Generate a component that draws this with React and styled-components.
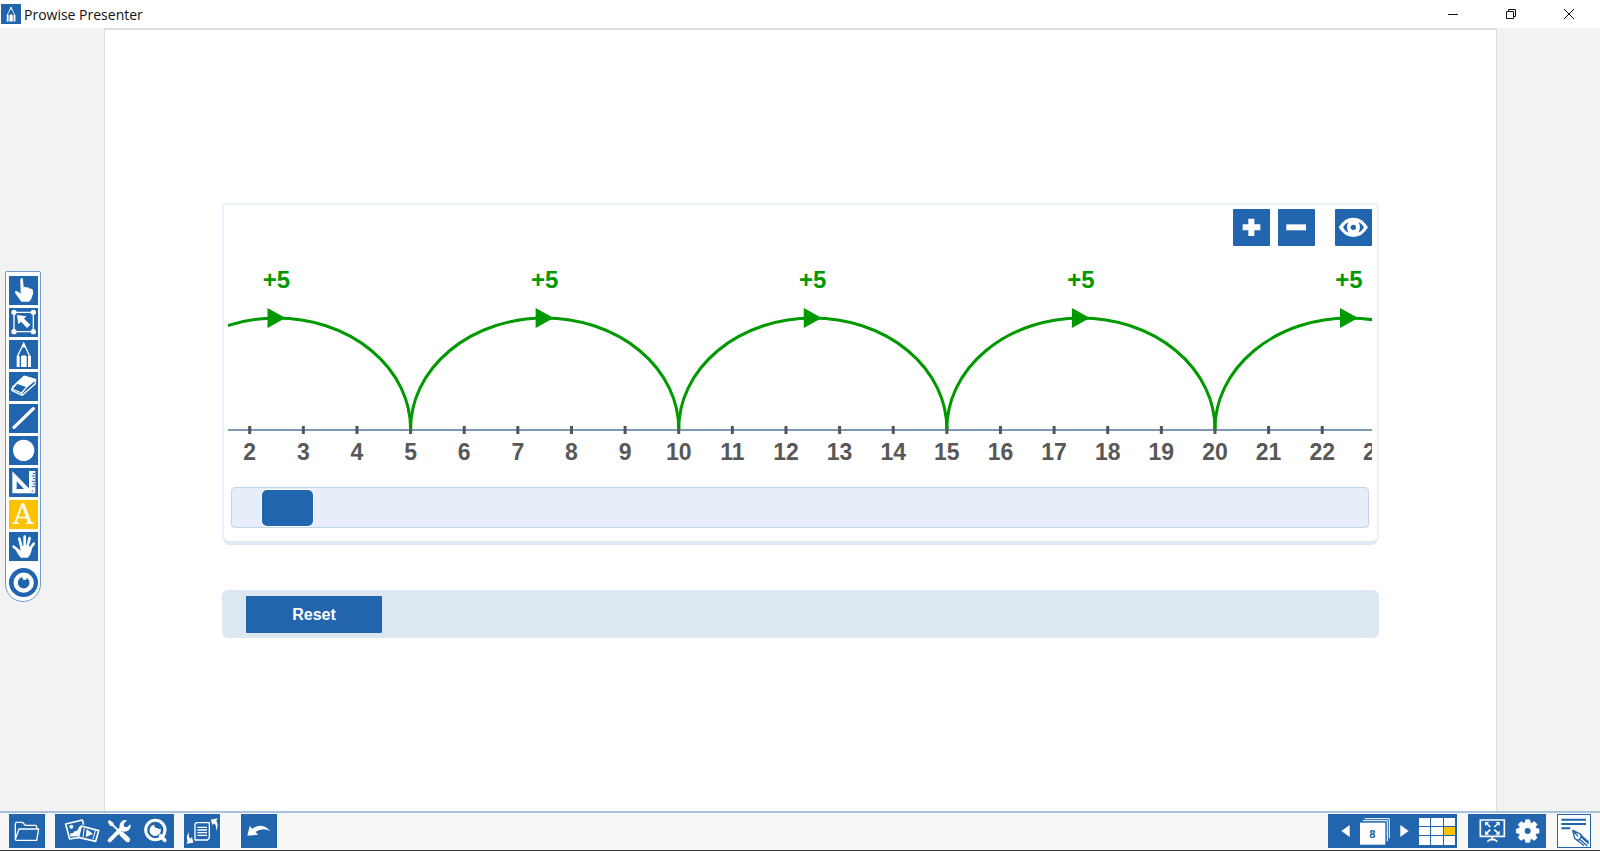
import React, { useState, useRef, useLayoutEffect } from 'react'
import styled, { createGlobalStyle } from 'styled-components';

const BLUE = '#2165ae';
const GREEN = '#009900';

const GlobalStyle = createGlobalStyle`
  * {
    box-sizing: border-box;
  }
  body {
    margin: 0;
    font-family: "Liberation Sans", Arial, sans-serif;
  }
  button, input {
    margin: 0;
    padding: 0;
    border: none;
    font: inherit;
  }
  button {
    cursor: pointer;
  }
`;

const Main = styled.div`
  display: flex;
  flex-direction: column;
  min-height: 100vh;
  background-color: #f2f2f2;
  border-bottom: 1px solid #33343a;
`;
const TitleBar = styled.header`
  display: flex;
  align-items: center;
  height: 28px;
  padding: 0 2px 0 1px;
  background-color: #fff;
`;
const Logo = styled.span`
  background-color: ${BLUE};
  color: #fff;
`;
const Title = styled.h1`
  flex-grow: 1;
  margin: 0 0 0 3px;
  padding-top: 2px;
  font-family: "Open Sans", "Noto Sans", sans-serif;
  font-size: 14px;
  font-weight: 400;
  line-height: 26px;
  color: #111;
`;
const WindowButton = styled.button`
  width: 58px;
  height: 28px;
  background: none;
`;
const Svg = styled.svg`
  display: block;
  margin: 0 auto;
  flex-shrink: 0;
`;
const Workspace = styled.div`
  flex-grow: 1;
  display: grid;
  grid-template-columns: 104px 1fr 103px;
`;
const Page = styled.main`
  min-width: 0;
  border: 1px solid #dcdcdc;
  border-top: 2px solid #dedede;
  border-bottom: none;
  background-color: #fff;
  padding: 173px 117px 0;
`;
const SideBar = styled.nav`
  align-self: center;
  display: flex;
  flex-direction: column;
  align-items: center;
  gap: 3px;
  width: 36px;
  margin: 34px 0 0 5px;
  padding: 4px 0;
  border: 1px solid #6b9bd0;
  border-radius: 2px 2px 18px 18px;
  background-color: #fff;
`;
const ToolButton = styled.button`
  display: flex;
  align-items: center;
  justify-content: center;
  width: 29px;
  height: 29px;
  color: #fff;
  background-color: ${(props) => (props.$active ? '#fdc300' : BLUE)};
`;
const RoundButton = styled(ToolButton)`
  border-radius: 50%;
  margin-top: 4px;
`;
const Letter = styled.span`
  font-family: "DejaVu Serif", serif;
  font-size: 28px;
  line-height: 29px;
`;
const Card = styled.section`
  border: 2px solid #eaf1f9;
  border-bottom: 4px solid #dfe9f3;
  border-radius: 4px 4px 8px 8px;
  padding: 4px 5px 13px 4px;
`;
const CardTools = styled.div`
  display: flex;
  justify-content: flex-end;
  gap: 8px;
`;
const CardButton = styled.button`
  width: 37px;
  height: 37px;
  border-radius: 1px;
  background-color: ${BLUE};
  color: #fff;
  &:last-child {
    margin-left: 12px;
  }
`;
const Chart = styled.svg`
  display: block;
  width: 100%;
  height: 241px;
  overflow: hidden;
  font-size: 23px;
  font-weight: 700;
  text-anchor: middle;
`;
const ScrollArea = styled.div`
  padding: 0 3px;
`;
const Scroll = styled.input`
  appearance: none;
  display: block;
  width: 100%;
  height: 41px;
  border: 1px solid #c3d5ea;
  border-radius: 4px;
  background-color: #e8eef9;
  &::-webkit-slider-thumb {
    appearance: none;
    width: 51px;
    height: 36px;
    border-radius: 5px;
    background-color: ${BLUE};
    box-shadow: 0 0 0 1px #fff;
  }
`;
const ResetBar = styled.div`
  margin-top: 45px;
  padding: 6px 24px 5px;
  border-radius: 6px;
  background-color: #dde7f1;
`;
const Reset = styled.button`
  display: block;
  width: 136px;
  height: 37px;
  border-radius: 1px;
  background-color: ${BLUE};
  color: #fff;
  font-size: 16px;
  font-weight: 700;
`;
const BottomBar = styled.footer`
  display: flex;
  align-items: center;
  justify-content: space-between;
  padding: 1px 9px 2px;
  border-top: 2px solid #a9c1dd;
  background-color: #f8f8f8;
`;
const BarSide = styled.div`
  display: flex;
  gap: ${(props) => props.$gap};
`;
const Group = styled.div`
  display: flex;
  align-items: center;
  gap: ${(props) => props.$gap || '0'};
  height: 34px;
  padding: ${(props) => props.$pad || '0'};
  background-color: ${BLUE};
  color: #fff;
`;
const BarButton = styled.button`
  display: flex;
  align-items: center;
  height: 34px;
  background: none;
  color: inherit;
`;
const NoteButton = styled(BarButton)`
  border: 1px solid ${BLUE};
  background-color: #fff;
  color: ${BLUE};
`;
const Undo = styled(Group)`
  margin-left: 11px;
`;
const PageNumber = styled.button`
  position: relative;
  width: 30px;
  height: 27px;
  background: none;
  color: inherit;
`;
const PageCount = styled.span`
  position: absolute;
  left: 0;
  bottom: 0;
  width: 25px;
  font-family: "Open Sans", sans-serif;
  font-size: 11px;
  font-weight: 700;
  line-height: 23px;
  color: ${BLUE};
`;
const Overview = styled.button`
  display: grid;
  grid-template-columns: repeat(3, 1fr);
  gap: 1px;
  width: 36px;
  height: 27px;
  background: none;
`;
const Cell = styled.span`
  height: 100%;
  min-height: 8px;
  background-color: ${(props) => (props.$current ? '#fdc300' : '#fff')};
`;

// icons are drawn on a grid three times finer than their size on the page
const Icon = ({ w, h = w, grid = `0 0 ${w * 3} ${h * 3}`, children }) => (
  <Svg width={w} height={h} viewBox={grid} fill="none" stroke="none" aria-hidden="true">
    {children}
  </Svg>
);

const PencilShape = () => (
  <>
    <path d="M25 50 L44 10 L63 50" stroke="currentColor" strokeWidth="4" />
    <path d="M44 6 L37 24 Q44 19 51 24Z M23 49 q5 -5 9 0 V81 H23Z M36 49 q8 -7 17 0 V81 H36Z M57 49 q5 -5 9 0 V81 H57Z" fill="currentColor" />
  </>
);

const tools = [
  { name: 'Select', icon: <path fill="currentColor" d="M34 12 Q34 6 38 6 Q42 6 42 12 L44 34 Q48 30 53 35 Q58 32 62 38 Q68 36 72 43 Q74 52 70 61 Q68 70 60 77 H37 Q32 70 23 58 Q15 48 20 45 Q25 43 35 53 Z" /> },
  { name: 'Select area', icon: (
    <>
      <path d="M15 13 H73 V71 H15Z" stroke="currentColor" strokeWidth="4" />
      <path fill="currentColor" d="M24 21 L52 25 L45 32 L64 50 L54 60 L36 41 L28 49Z" />
      {[[15, 13], [73, 13], [15, 71], [73, 71]].map(([x, y]) => (
        <circle key={`${x}-${y}`} cx={x} cy={y} r="8" fill="currentColor" />
      ))}
    </>
  ) },
  { name: 'Pen', icon: <PencilShape /> },
  { name: 'Eraser', icon: (
    <g stroke="currentColor" strokeWidth="4" strokeLinejoin="round">
      <path d="M46 13 L80 23 L78 36 L40 70 L9 56 L11 45 L24 33Z" />
      <path d="M46 13 L79 23 L54 44 L24 33Z" fill="currentColor" />
      <path d="M24 33 L9 51 L38 63 L54 44 M38 63 L40 70" />
    </g>
  ) },
  { name: 'Line', icon: <path d="M15 70 L73 14" stroke="currentColor" strokeWidth="10" strokeLinecap="round" /> },
  { name: 'Shapes', icon: <circle cx="44" cy="43" r="32" fill="currentColor" /> },
  { name: 'Ruler', icon: (
    <>
      <path fill="currentColor" fillRule="evenodd" d="M10 10 L74 76 H10Z M23 40 V63 H45Z" />
      <path fill="currentColor" d="M60 9 H79 V76 H69 L60 61Z" />
      <path stroke={BLUE} strokeWidth="3" d="M71 16 H79 M68 24 H79 M71 32 H79 M68 40 H79 M71 48 H79 M68 56 H79 M68 69 H73" />
    </>
  ) },
  { name: 'Text', active: true },
  { name: 'Move', icon: (
    <>
      <path d="M38 48 L31 20 M47 46 L47 14 M54 48 L62 18 M60 54 L74 35 M34 60 L14 44" stroke="currentColor" strokeWidth="8" strokeLinecap="round" />
      <path fill="currentColor" d="M34 42 H59 L69 49 Q66 70 56 77 H36 Q28 70 20 54 L35 56Z" />
    </>
  ) },
];

const UNIT = 53.625; // width of one step on the number line
const JUMP = 5;
const START = 1.595;
const AXIS = 184;
const LABEL = 0.3; // a label reaches this far past its tick, in steps

const NumberLine = ({ start }) => {
  const chartRef = useRef(null);
  const [width, setWidth] = useState(0);

  useLayoutEffect(() => {
    const measure = () => setWidth(chartRef.current.getBoundingClientRect().width);
    measure();
    window.addEventListener('resize', measure);
    return () => window.removeEventListener('resize', measure);
  }, []);

  const end = start + width / UNIT;
  const rx = (JUMP * UNIT) / 2;
  const toX = (n) => (n - start) * UNIT;

  // only the part of the line that is in view
  const ticks = [];
  for (let n = Math.ceil(start - LABEL); n < end + LABEL; n++) ticks.push(n);
  const jumps = [];
  for (let n = Math.max(0, Math.floor(start / JUMP) * JUMP); n < end; n += JUMP) jumps.push(n);

  return (
    <Chart ref={chartRef} role="img" aria-label="Number line">
      <line x1="0" x2="100%" y1={AXIS} y2={AXIS} stroke="#7d9ab5" strokeWidth="2" />
      {ticks.map((n) => (
        <g key={n}>
          <line x1={toX(n)} x2={toX(n)} y1={AXIS - 4} y2={AXIS + 4} stroke="#555" strokeWidth="3" />
          <text x={toX(n)} y={AXIS + 30} fill="#585858">{n}</text>
        </g>
      ))}
      {jumps.map((n) => {
        const mid = toX(n) + rx;
        return (
          <g key={n}>
            <path d={`M${toX(n)} ${AXIS - 1} A${rx} 111 0 0 1 ${toX(n + JUMP)} ${AXIS - 1}`} fill="none" stroke={GREEN} strokeWidth="3" />
            <path d={`M${mid - 9} 62 L${mid + 9} 72 L${mid - 9} 82Z`} fill={GREEN} />
            <text x={mid} y="42" fontSize="24" fill={GREEN}>+{JUMP}</text>
          </g>
        );
      })}
    </Chart>
  );
};

export default function App() {
  const [start, setStart] = useState(START);
  const [pageNumber, setPageNumber] = useState(8);

  return (
    <Main>
      <GlobalStyle />
      <TitleBar>
        <Logo>
          <Icon w={20} grid="-6 -6 100 100"><PencilShape /></Icon>
        </Logo>
        <Title>Prowise Presenter</Title>
        <WindowButton aria-label="Minimize">
          <Svg width="10" height="10"><path d="M0 5.5 H10" stroke="#111" /></Svg>
        </WindowButton>
        <WindowButton aria-label="Restore">
          <Svg width="10" height="10" fill="none" stroke="#111"><path d="M.5 2.5 H7.5 V9.5 H.5Z M2.5 2.5 V.5 H9.5 V7.5 H7.5" /></Svg>
        </WindowButton>
        <WindowButton aria-label="Close">
          <Svg width="10" height="10"><path d="M0 0 L10 10 M10 0 L0 10" stroke="#111" /></Svg>
        </WindowButton>
      </TitleBar>

      <Workspace>
        <SideBar>
          {tools.map((tool) => (
            <ToolButton key={tool.name} aria-label={tool.name} $active={tool.active}>
              {tool.icon ? <Icon w={29}>{tool.icon}</Icon> : <Letter>A</Letter>}
            </ToolButton>
          ))}
          <RoundButton aria-label="Menu">
            <Icon w={29}>
              <circle cx="44" cy="44" r="24" stroke="currentColor" strokeWidth="13" />
              <circle cx="47" cy="29" r="7" fill="currentColor" />
            </Icon>
          </RoundButton>
        </SideBar>

        <Page>
          <Card>
            <CardTools>
              <CardButton aria-label="Zoom in">
                <Icon w={37}><path d="M55 29 V81 M29 55 H82" stroke="currentColor" strokeWidth="18" /></Icon>
              </CardButton>
              <CardButton aria-label="Zoom out">
                <Icon w={37}><path d="M25 55 H84" stroke="currentColor" strokeWidth="18" /></Icon>
              </CardButton>
              <CardButton aria-label="Show or hide">
                <Icon w={37}>
                  <path fill="currentColor" d="M11 55 Q28 26 55 26 Q82 26 99 55 Q82 84 55 84 Q28 84 11 55Z" />
                  <path fill={BLUE} d="M24 55 Q30 43 41 39 Q31 55 41 71 Q30 67 24 55Z M87 55 Q81 43 70 39 Q80 55 70 71 Q81 67 87 55Z" />
                  <circle cx="55" cy="55" r="8" fill={BLUE} />
                </Icon>
              </CardButton>
            </CardTools>
            <NumberLine start={start} />
            <ScrollArea>
              <Scroll
                type="range"
                aria-label="Position on the number line"
                min="-10"
                max="410"
                step="any"
                value={start}
                onChange={(e) => setStart(Number(e.target.value))}
              />
            </ScrollArea>
          </Card>
          <ResetBar>
            <Reset onClick={() => setStart(START)}>Reset</Reset>
          </ResetBar>
        </Page>
      </Workspace>

      <BottomBar>
        <BarSide $gap="10px">
          <Group>
            <BarButton aria-label="Open">
              <Icon w={36} h={34}>
                <path d="M19 76 V30 Q19 25 23 25 H40 L49 34 H79 Q83 34 83 38 V45 M19 76 L30 45 H89 L83 79 H22 Q19 79 19 76Z" stroke="currentColor" strokeWidth="4" strokeLinejoin="round" />
              </Icon>
            </BarButton>
          </Group>
          <Group $gap="1px" $pad="0 0 0 9px">
            <BarButton aria-label="Media">
              <Icon w={36} h={34}>
                <path d="M45 70 L17 75 L5 30 L55 18 L59 32" stroke="currentColor" strokeWidth="5" strokeLinejoin="round" />
                <circle cx="22" cy="38" r="6" fill="currentColor" />
                <path d="M20 68 L18 58 Q27 61 31 52 Q41 53 45 38 L52 36 L41 66Z" fill="currentColor" />
                <path d="M52 36 L104 50 L95 82 L43 70Z" fill={BLUE} stroke="currentColor" strokeWidth="5" strokeLinejoin="round" />
                <path d="M61 42 L57 69 M94 50 L87 76" stroke="currentColor" strokeWidth="3" />
                <path d="M68 45 L87 60 L65 69Z" fill="currentColor" />
              </Icon>
            </BarButton>
            <BarButton aria-label="Tools">
              <Icon w={36} h={34}>
                <g stroke="currentColor" strokeLinecap="round">
                  <path d="M26 79 L64 41" strokeWidth="12" />
                  <path d="M28 26 L52 50" strokeWidth="6" strokeLinecap="butt" />
                  <path d="M62 60 L80 77" strokeWidth="15" />
                </g>
                <path fill="currentColor" d="M20 23 L25 18 L37 26 L38 34 L34 37 L27 35Z M56 46 Q53 30 63 21 Q70 17 78 19 L68 30 L70 38 L78 40 L88 31 Q91 41 83 49 Q73 56 62 51Z" />
              </Icon>
            </BarButton>
            <BarButton aria-label="Search">
              <Icon w={36} h={34}>
                <circle cx="52" cy="48" r="29" stroke="currentColor" strokeWidth="9" />
                <path fill="currentColor" d="M49 32 A17 17 0 1 0 68 44 A8 8 0 0 1 58 42 A8 8 0 0 1 49 32Z" />
                <path d="M68 66 L80 79" stroke="currentColor" strokeWidth="11" strokeLinecap="round" />
              </Icon>
            </BarButton>
          </Group>
          <Group>
            <BarButton aria-label="Change page">
              <Icon w={36} h={34}>
                <path d="M37 26 H76 V72 L70 78 H33 V30Z" stroke="currentColor" strokeWidth="4" strokeLinejoin="round" />
                <path d="M40 40 H69 M40 48 H69 M40 56 H69 M40 64 H69" stroke="currentColor" strokeWidth="4" />
                <path fill="currentColor" d="M80 17 L101 13 L97 20 Q105 34 96 52 Q99 36 90 28 L86 34Z M28 86 L7 89 L11 82 Q5 68 15 53 Q12 67 19 74 L24 69Z" />
              </Icon>
            </BarButton>
          </Group>
          <Undo>
            <BarButton aria-label="Undo">
              <Icon w={36} h={34}>
                <path fill="currentColor" d="M19 65 L26 36 L34 44 Q62 23 88 51 Q64 39 43 54 L52 62Z" />
              </Icon>
            </BarButton>
          </Undo>
        </BarSide>

        <BarSide $gap="11px">
          <Group $gap="10px" $pad="0 2px 0 13px">
            <BarButton aria-label="Previous page" onClick={() => setPageNumber(Math.max(1, pageNumber - 1))}>
              <Icon w={9} h={12}><path fill="currentColor" d="M26 0 V36 L1 18Z" /></Icon>
            </BarButton>
            <PageNumber aria-label="Pages">
              <Icon w={30} h={27}>
                <path d="M14 2 H88 V61" stroke="currentColor" strokeWidth="3" />
                <path d="M8 8 H82 V70" stroke="currentColor" strokeWidth="3" />
                <path fill="currentColor" d="M0 14 H76 V80 H0Z" />
              </Icon>
              <PageCount>{pageNumber}</PageCount>
            </PageNumber>
            <BarButton aria-label="Next page" onClick={() => setPageNumber(pageNumber + 1)}>
              <Icon w={9} h={12}><path fill="currentColor" d="M1 0 V36 L26 18Z" /></Icon>
            </BarButton>
            <Overview aria-label="Page overview">
              {[...Array(9)].map((_, index) => (
                <Cell key={index} $current={index === 5} />
              ))}
            </Overview>
          </Group>
          <Group $pad="0 3px">
            <BarButton aria-label="Full screen">
              <Icon w={36} h={34}>
                <path d="M28 18 H100 V67 H28Z" stroke="currentColor" strokeWidth="5" />
                <path d="M64 67 V78 M49 83 L57 77 H71 L79 83" stroke="currentColor" strokeWidth="5" />
                <path d="M45 27 L58 39 M83 27 L70 39 M45 59 L58 47 M83 59 L70 47" stroke="currentColor" strokeWidth="5" />
                <path fill="currentColor" d="M42 24 H55 L42 36Z M86 24 H73 L86 36Z M42 62 H55 L42 50Z M86 62 H73 L86 50Z" />
              </Icon>
            </BarButton>
            <BarButton aria-label="Settings">
              <Icon w={36} h={34}>
                <circle cx="62" cy="51" r="18" stroke="currentColor" strokeWidth="18" />
                {[0, 45, 90, 135, 180, 225, 270, 315].map((angle) => (
                  <path key={angle} d="M54 27 L56 17 H68 L70 27Z" fill="currentColor" stroke="currentColor" strokeWidth="2" transform={`rotate(${angle} 62 51)`} />
                ))}
              </Icon>
            </BarButton>
          </Group>
          <NoteButton aria-label="Notes">
            <Icon w={32}>
              <path d="M10 14 H84 M10 27 H84 M10 40 H37" stroke="currentColor" strokeWidth="6" />
              <path d="M44 45 L50 70 Q56 76 68 84 L78 92 M44 45 L68 58 Q74 66 84 74 L92 80 M46 48 L60 64 M54 74 Q70 78 69 60 M64 72 L88 93 M70 66 L92 86" stroke="currentColor" strokeWidth="4" strokeLinejoin="round" />
            </Icon>
          </NoteButton>
        </BarSide>
      </BottomBar>
    </Main>
  )
}
